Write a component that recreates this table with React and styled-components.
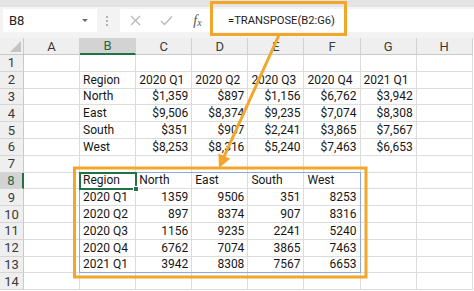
import React from 'react';
import styled, { createGlobalStyle } from 'styled-components';

const GlobalStyle = createGlobalStyle`
  html, body {
    margin: 0;
    padding: 0;
    background: #fff;
    overflow: hidden;
  }
  body {
    font-family: Roboto, "Liberation Sans", Arial, sans-serif;
  }
`;

const COLS = ['A', 'B', 'C', 'D', 'E', 'F', 'G', 'H'];

// each row: 8 cells, A..H. strings left aligned, numbers right aligned
const ROWS = [
  [],
  ['', 'Region', '2020 Q1', '2020 Q2', '2020 Q3', '2020 Q4', '2021 Q1'],
  ['', 'North', '$1,359', '$897', '$1,156', '$6,762', '$3,942'],
  ['', 'East', '$9,506', '$8,374', '$9,235', '$7,074', '$8,308'],
  ['', 'South', '$351', '$907', '$2,241', '$3,865', '$7,567'],
  ['', 'West', '$8,253', '$8,316', '$5,240', '$7,463', '$6,653'],
  [],
  ['', 'Region', 'North', 'East', 'South', 'West'],
  ['', '2020 Q1', 1359, 9506, 351, 8253],
  ['', '2020 Q2', 897, 8374, 907, 8316],
  ['', '2020 Q3', 1156, 9235, 2241, 5240],
  ['', '2020 Q4', 6762, 7074, 3865, 7463],
  ['', '2021 Q1', 3942, 8308, 7567, 6653],
  [],
];

const isNumeric = (v) => typeof v === 'number' || /^\$[\d,]+$/.test(v);

const Page = styled.div`
  position: relative;
  width: 474px;
  height: 291px;
  overflow: hidden;
  background: #fff;
`;

const RibbonEdge = styled.div`
  height: 7px;
  background: #e4e4e4;
`;

const FormulaBar = styled.div`
  height: 31px;
  box-sizing: border-box;
  background: #f3f3f3;
  display: flex;
  align-items: flex-start;
  padding: 2px 0 0 3px;
`;

const NameBox = styled.div`
  width: 94px;
  height: 23px;
  box-sizing: border-box;
  background: #fff;
  display: flex;
  align-items: center;
  justify-content: space-between;
  padding: 0 9px 0 6px;
  font-size: 13px;
  color: #222;
`;

const Caret = styled.span`
  width: 0;
  height: 0;
  border-left: 3px solid transparent;
  border-right: 3px solid transparent;
  border-top: 3px solid #6b6b6b;
`;

const Grip = styled.div`
  width: 23px;
  height: 23px;
  display: flex;
  flex-direction: column;
  align-items: center;
  justify-content: center;
  gap: 2px;
  padding-right: 4px;
  box-sizing: border-box;

  span {
    width: 2px;
    height: 2px;
    background: #b2b2b2;
  }
`;

const FormulaBox = styled.div`
  flex: 1;
  height: 23px;
  background: #fff;
  display: flex;
  align-items: center;
`;

const IconSlot = styled.div`
  width: 31px;
  height: 23px;
  display: flex;
  align-items: center;
  justify-content: center;
  color: #b9b9b9;
`;

const FxMark = styled.span`
  font-family: "Liberation Serif", "Times New Roman", serif;
  font-style: italic;
  color: #555;
  font-size: 14px;

  sub {
    font-size: 10px;
    vertical-align: -1px;
  }
`;

const FormulaInput = styled.div`
  padding-left: 15px;
  font-size: 11.2px;
  color: #1e1e1e;
  white-space: nowrap;
`;

const Sheet = styled.div`
  position: relative;
  display: grid;
  grid-template-columns: 24px repeat(8, 56.1px);
  grid-template-rows: 17px;
  grid-auto-rows: 16.8px;
`;

const Corner = styled.div`
  position: relative;
  background: #efefef;
  border-right: 1px solid #c9c9c9;
  border-bottom: 1px solid #c9c9c9;
  box-sizing: border-box;

  &::after {
    content: '';
    position: absolute;
    right: 2px;
    bottom: 2px;
    width: 0;
    height: 0;
    border-left: 11px solid transparent;
    border-bottom: 11px solid #c4c4c4;
  }
`;

const ColHead = styled.div`
  background: ${(p) => (p.$active ? '#d3d3d3' : '#efefef')};
  border-right: 1px solid #d2d2d2;
  border-bottom: ${(p) => (p.$active ? '2px solid #217346' : '1px solid #c9c9c9')};
  box-sizing: border-box;
  display: flex;
  align-items: center;
  justify-content: center;
  font-size: 13px;
  color: ${(p) => (p.$active ? '#1f6b43' : '#3a3a3a')};
`;

const RowHead = styled.div`
  background: ${(p) => (p.$active ? '#d3d3d3' : '#efefef')};
  border-right: ${(p) => (p.$active ? '2px solid #217346' : '1px solid #c9c9c9')};
  border-bottom: 1px solid #d6d6d6;
  box-sizing: border-box;
  display: flex;
  align-items: center;
  justify-content: center;
  font-size: 13px;
  color: ${(p) => (p.$active ? '#1f6b43' : '#3a3a3a')};
`;

const Cell = styled.div`
  border-right: 1px solid #dcdcdc;
  border-bottom: 1px solid #dcdcdc;
  box-sizing: border-box;
  display: flex;
  align-items: flex-end;
  justify-content: ${(p) => (p.$right ? 'flex-end' : 'flex-start')};
  padding: 0 3px 1px;
  font-size: 12px;
  line-height: 14px;
  color: #161616;
  white-space: nowrap;
  overflow: visible;
`;

// overlays pinned to grid areas
const RangeFrame = styled.div`
  position: absolute;
  grid-column: 3 / 8;
  grid-row: 9 / 15;
  inset: -1px 0 0 -1px;
  border: 1px solid #8fa9d8;
  pointer-events: none;
`;

const ActiveCell = styled.div`
  position: absolute;
  grid-column: 3 / 4;
  grid-row: 9 / 10;
  inset: -1px -1px -1px -1px;
  border: 2px solid #217346;
  pointer-events: none;

  &::after {
    content: '';
    position: absolute;
    right: -4px;
    bottom: -4px;
    width: 4px;
    height: 4px;
    background: #217346;
    border: 1px solid #fff;
  }
`;

const Annotation = styled.svg`
  position: absolute;
  inset: 0;
  pointer-events: none;
`;

const ORANGE = '#f2a72b';

function Annotations() {
  // arrow from formula box down to the transposed range
  const start = [279, 35];
  const tip = [219, 168];
  const dx = tip[0] - start[0];
  const dy = tip[1] - start[1];
  const len = Math.hypot(dx, dy);
  const ux = dx / len;
  const uy = dy / len;
  const headLen = 13;
  const half = 6.5;
  const bx = tip[0] - ux * headLen;
  const by = tip[1] - uy * headLen;
  const p1 = [bx - uy * half, by + ux * half];
  const p2 = [bx + uy * half, by - ux * half];

  return (
    <Annotation width="474" height="291" viewBox="0 0 474 291">
      <rect x="211.5" y="2.5" width="134" height="32" fill="none" stroke={ORANGE} strokeWidth="3" />
      <rect x="74.5" y="168" width="291.5" height="109" fill="none" stroke={ORANGE} strokeWidth="3" />
      <line x1={start[0]} y1={start[1]} x2={bx + ux * 2} y2={by + uy * 2} stroke={ORANGE} strokeWidth="3" />
      <polygon points={`${tip[0]},${tip[1]} ${p1[0]},${p1[1]} ${p2[0]},${p2[1]}`} fill={ORANGE} />
    </Annotation>
  );
}

export default function App() {
  return (
    <Page>
      <GlobalStyle />
      <RibbonEdge />
      <FormulaBar>
        <NameBox>
          <span>B8</span>
          <Caret />
        </NameBox>
        <Grip>
          <span />
          <span />
          <span />
        </Grip>
        <FormulaBox>
          <IconSlot>
            <svg width="11" height="11" viewBox="0 0 11 11">
              <path d="M1 1 L10 10 M10 1 L1 10" stroke="currentColor" strokeWidth="1.3" fill="none" />
            </svg>
          </IconSlot>
          <IconSlot>
            <svg width="13" height="11" viewBox="0 0 13 11">
              <path d="M1 6 L4.5 9.5 L12 1.5" stroke="currentColor" strokeWidth="1.3" fill="none" />
            </svg>
          </IconSlot>
          <IconSlot>
            <FxMark>
              f<sub>x</sub>
            </FxMark>
          </IconSlot>
          <FormulaInput>=TRANSPOSE(B2:G6)</FormulaInput>
        </FormulaBox>
      </FormulaBar>

      <Sheet>
        <Corner />
        {COLS.map((c) => (
          <ColHead key={c} $active={c === 'B'}>
            {c}
          </ColHead>
        ))}
        {ROWS.map((row, r) => (
          <React.Fragment key={r}>
            <RowHead $active={r === 7}>{r + 1}</RowHead>
            {COLS.map((c, i) => {
              const v = row[i] ?? '';
              return (
                <Cell key={c} $right={v !== '' && isNumeric(v)}>
                  {v}
                </Cell>
              );
            })}
          </React.Fragment>
        ))}
        <RangeFrame />
        <ActiveCell />
      </Sheet>

      <Annotations />
    </Page>
  );
}
